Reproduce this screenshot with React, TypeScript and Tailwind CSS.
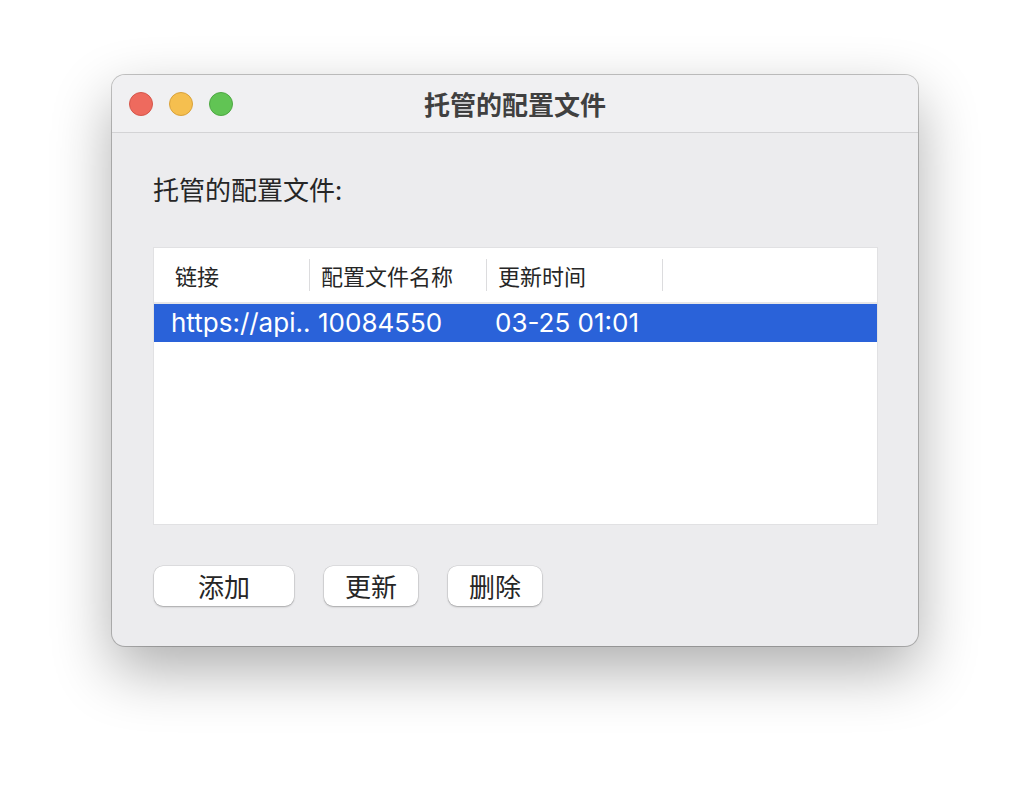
const CJK = { fontFamily: '"Noto Sans CJK SC", "Noto Sans", sans-serif' };
const LATIN = { fontFamily: 'Inter, "Noto Sans CJK SC", sans-serif' };

const COLUMNS = [
  { label: "链接", width: "w-[156px]" },
  { label: "配置文件名称", width: "w-[177px]" },
  { label: "更新时间", width: "w-[176px]" },
];

const ROW = ["https://api..", "10084550", "03-25 01:01"];

function TrafficLights() {
  return (
    <div className="absolute left-[17px] top-[17px] flex gap-[16px]">
      <span className="w-[24px] h-[24px] rounded-full bg-[#ee6a5e] border border-[#d5564b]" />
      <span className="w-[24px] h-[24px] rounded-full bg-[#f5bf4f] border border-[#d9a23b]" />
      <span className="w-[24px] h-[24px] rounded-full bg-[#61c454] border border-[#4ea843]" />
    </div>
  );
}

function Button({ label, width }: { label: string; width: string }) {
  return (
    <button
      className={`${width} h-[40px] rounded-[9px] bg-white text-[26px] leading-none text-[#262626] shadow-[0_1px_2px_rgba(0,0,0,0.25),0_0_0_0.5px_rgba(0,0,0,0.12)] flex items-center justify-center`}
      style={CJK}
    >
      {label}
    </button>
  );
}

export default function App() {
  return (
    <div className="w-[1030px] h-[794px] bg-white flex pl-[112px] pt-[75px]">
      <div className="relative w-[806px] h-[571px] rounded-[13px] bg-[#ececee] overflow-hidden shadow-[0_24px_60px_rgba(0,0,0,0.32),0_0_0_1px_rgba(0,0,0,0.22)]">
        {/* title bar */}
        <div className="relative h-[58px] bg-[#f0f0f2] border-b border-[#d3d3d5] flex items-center justify-center">
          <TrafficLights />
          <span className="text-[26px] font-bold text-[#404040] leading-none" style={CJK}>
            托管的配置文件
          </span>
        </div>

        <div className="pl-[41px] pr-[40px]">
          <p className="pt-[40px] text-[26px] leading-[32px] text-[#262626]" style={CJK}>
            托管的配置文件:
          </p>

          {/* table */}
          <div className="mt-[42px] h-[278px] bg-white border border-[#e1e1e3]">
            <div className="h-[56px] flex items-center border-b-2 border-[#e6e6e8]">
              {COLUMNS.map((c, i) => (
                <div
                  key={c.label}
                  className={`${c.width} h-[32px] flex items-center border-r border-[#dcdcde] ${i === 0 ? "pl-[21px]" : "pl-[11px]"}`}
                >
                  <span className="text-[22px] leading-none text-[#262626]" style={CJK}>
                    {c.label}
                  </span>
                </div>
              ))}
            </div>
            <div className="h-[38px] bg-[#2a62d9] flex items-center text-white">
              {ROW.map((v, i) => (
                <div
                  key={v}
                  className={`${COLUMNS[i].width} ${i === 0 ? "pl-[17px]" : "pl-[8px]"} text-[26px] leading-none whitespace-nowrap`}
                  style={LATIN}
                >
                  {v}
                </div>
              ))}
            </div>
          </div>

          {/* buttons */}
          <div className="mt-[41px] ml-px flex gap-[30px]">
            <Button label="添加" width="w-[140px]" />
            <Button label="更新" width="w-[94px]" />
            <Button label="删除" width="w-[94px]" />
          </div>
        </div>
      </div>
    </div>
  );
}
